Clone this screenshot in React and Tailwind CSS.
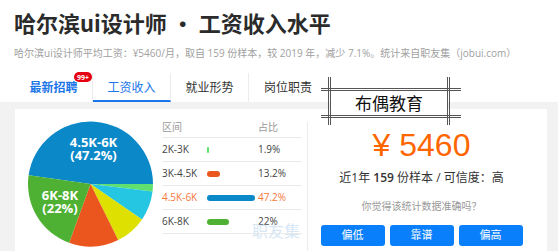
import React from 'react';

// ─── Data ─────────────────────────────────────────────────────────────────────

const SLICES = [
  { from: 188, to: 360, color: '#0b88c8' },
  { from: 0, to: 7, color: '#5fe06f' },
  { from: 7, to: 34.5, color: '#25c6e2' },
  { from: 34.5, to: 63.7, color: '#dde000' },
  { from: 63.7, to: 110, color: '#ea561d' },
  { from: 110, to: 188, color: '#4fb133' },
];

const ROWS = [
  { range: '2K-3K', pct: '1.9%', w: 2, color: '#5fe06f' },
  { range: '3K-4.5K', pct: '13.2%', w: 13, color: '#ea561d' },
  { range: '4.5K-6K', pct: '47.2%', w: 48, color: '#0b88c8', hi: true },
  { range: '6K-8K', pct: '22%', w: 22, color: '#4fb133' },
];

const TABS = ['最新招聘', '工资收入', '就业形势', '岗位职责'];

function arcPath(cx, cy, r, a0, a1) {
  const rad = (d) => (d * Math.PI) / 180;
  const x0 = cx + r * Math.cos(rad(a0));
  const y0 = cy + r * Math.sin(rad(a0));
  const x1 = cx + r * Math.cos(rad(a1));
  const y1 = cy + r * Math.sin(rad(a1));
  const large = a1 - a0 > 180 ? 1 : 0;
  return `M${cx},${cy} L${x0},${y0} A${r},${r} 0 ${large} 1 ${x1},${y1} Z`;
}

// ─── Pieces ───────────────────────────────────────────────────────────────────

function Pie() {
  return (
    <svg width="128" height="128" viewBox="0 0 128 128" className="shrink-0">
      {SLICES.map((s, i) => (
        <path key={i} d={arcPath(63.5, 63, 62.5, s.from, s.to)} fill={s.color} />
      ))}
      <g fill="#fff" fontWeight="700" fontSize="13" textAnchor="middle" fontFamily="'Open Sans', sans-serif">
        <text x="66.5" y="26">4.5K-6K</text>
        <text x="66.5" y="38.5">(47.2%)</text>
        <text x="33" y="79">6K-8K</text>
        <text x="33" y="91.5">(22%)</text>
      </g>
    </svg>
  );
}

function Table() {
  return (
    <div className="ml-[7px] mt-[-3px] w-[140px] text-[10px]">
      <div className="flex h-[20px] items-center border-b border-[#ebebeb] text-[10px] text-[#999]">
        <span className="w-[96px]">区间</span>
        <span>占比</span>
      </div>
      {ROWS.map((r) => (
        <div
          key={r.range}
          className={`flex h-[24px] items-center border-b border-[#ebebeb] ${r.hi ? 'text-[#f5773e]' : 'text-[#444]'}`}
        >
          <span className="w-[45px]">{r.range}</span>
          <span className="flex w-[51px] items-center">
            <span className="h-[6px] rounded-full" style={{ width: r.w, background: r.color }} />
          </span>
          <span>{r.pct}</span>
        </div>
      ))}
    </div>
  );
}

function Summary() {
  return (
    <div className="mt-[13px] flex w-[240px] flex-col items-center border-l border-[#ececec] pr-[12px]">
      <div className="mt-[5px] font-['Liberation_Sans',sans-serif] text-[32px] leading-[36px] text-[#ff6600]">¥ 5460</div>
      <div className="mt-[6px] text-[12px] leading-[18px] text-[#333]">
        近1年 <span className="font-semibold">159</span> 份样本 / 可信度：高
      </div>
      <div className="mt-[12px] text-[10px] leading-[14px] text-[#999]">你觉得该统计数据准确吗？</div>
      <div className="mt-[12px] flex gap-[5px]">
        {['偏低', '靠谱', '偏高'].map((t) => (
          <button key={t} className="h-[21px] w-[64px] rounded-[3px] bg-[#0a7ffb] text-[11px] text-white">
            {t}
          </button>
        ))}
      </div>
    </div>
  );
}

// ─── Page ─────────────────────────────────────────────────────────────────────

export default function App() {
  return (
    <div className="relative h-[251px] w-[558px] overflow-hidden bg-white font-['Open_Sans','Noto_Sans_CJK_SC',sans-serif]">
      <div className="px-[14px] pt-[7px]">
        <h1 className="font-['Noto_Sans_CJK_SC',sans-serif] text-[22px] font-bold leading-[30px] text-[#2b2b2b]">
          哈尔滨ui设计师 • 工资收入水平
        </h1>
        <p className="mt-[8px] whitespace-nowrap text-[10px] leading-[16px] text-[#a0a0a0]">
          哈尔滨ui设计师平均工资：¥5460/月，取自 159 份样本，较 2019 年，减少 7.1%。统计来自职友集（jobui.com）
        </p>
      </div>

      {/* tabs */}
      <div className="mt-[12px] flex pl-[15px]">
        {TABS.map((t, i) => (
          <div
            key={t}
            className={`relative flex h-[29px] w-[78px] items-center justify-center text-[12px] ${
              i < 3 ? 'border-r border-[#ececec]' : ''
            } ${i === 1 ? 'border-b-2 border-b-[#1a75e8] pt-[2px] text-[#1a75e8]' : ''} ${
              i === 0 ? 'font-bold text-[#1a75e8]' : ''
            } ${i > 1 ? 'text-[#333]' : ''}`}
          >
            {t}
            {i === 0 && (
              <span className="absolute left-[59px] top-[-1px] flex h-[10px] w-[18px] items-center justify-center rounded-full bg-[#e60012] text-[7px] font-bold leading-none text-white">
                99+
              </span>
            )}
          </div>
        ))}
      </div>

      {/* content */}
      <div className="h-[149px] bg-[#f2f2f2] pl-[15px] pt-[7px]">
        <div className="flex h-full w-[532px] bg-white">
          <div className="flex w-[292px] items-start pl-[12px] pt-[12px]">
            <Pie />
            <Table />
          </div>
          <Summary />
        </div>
      </div>

      {/* overlays */}
      <div className="absolute left-[252px] top-[218px] font-['Noto_Sans_CJK_SC',sans-serif] text-[16px] text-[#cfe2f4] opacity-80">
        职友集
      </div>
      <div className="absolute left-[320px] top-[76px] h-[50px] w-[142px]">
        <svg width="142" height="50" className="absolute inset-0">
          <rect x="10" y="14" width="118" height="26" fill="#fff" />
          <g stroke="#555" strokeWidth="1">
            <line x1="1" y1="12.5" x2="141" y2="12.5" />
            <line x1="1" y1="14.5" x2="141" y2="14.5" />
            <line x1="1" y1="39.5" x2="141" y2="39.5" />
            <line x1="1" y1="41.5" x2="141" y2="41.5" />
            <line x1="8.5" y1="1" x2="8.5" y2="49" />
            <line x1="10.5" y1="1" x2="10.5" y2="49" />
            <line x1="127.5" y1="1" x2="127.5" y2="49" />
            <line x1="129.5" y1="1" x2="129.5" y2="49" />
          </g>
        </svg>
        <div className="absolute left-[10px] top-[15px] flex h-[24px] w-[118px] items-center justify-center font-['Noto_Sans_CJK_SC',sans-serif] text-[17px] text-[#111]">
          布偶教育
        </div>
      </div>
    </div>
  );
}
